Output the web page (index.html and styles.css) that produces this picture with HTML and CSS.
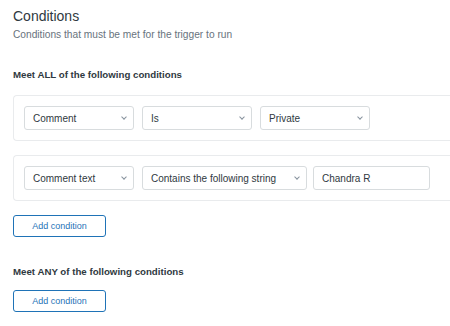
FILE: index.html
```html
<!DOCTYPE html>
<html lang="en">
<head>
    <meta charset="UTF-8">
    <meta name="viewport" content="width=device-width, initial-scale=1.0">
    <title>Conditions</title>
    <link rel="stylesheet" href="styles.css">
</head>
<body>
    <div class="page">
        <h1>Conditions</h1>
        <p class="subtitle">Conditions that must be met for the trigger to run</p>

        <h2>Meet ALL of the following conditions</h2>
        <div class="card">
            <div class="select w-110">Comment <span class="chevron"></span></div>
            <div class="select w-110">Is <span class="chevron"></span></div>
            <div class="select w-110">Private <span class="chevron"></span></div>
        </div>
        <div class="card">
            <div class="select w-110">Comment text <span class="chevron"></span></div>
            <div class="select w-164">Contains the following string <span class="chevron"></span></div>
            <input class="text-input" type="text" value="Chandra R">
        </div>
        <button class="add-btn">Add condition</button>

        <h2 class="any">Meet ANY of the following conditions</h2>
        <button class="add-btn">Add condition</button>
    </div>
</body>
</html>
```

FILE: styles.css
```css
body {
    margin: 0;
    font-family: "Liberation Sans", Arial, sans-serif;
    color: #2f3941;
    background: #fff;
    overflow: hidden;
}
.page {
    padding: 6px 0 0 13px;
}
h1 {
    margin: 0;
    font-size: 14px;
    font-weight: normal;
    line-height: 20px;
}
.subtitle {
    margin: 1px 0 0;
    font-size: 10.2px;
    line-height: 16px;
    color: #68737d;
}
h2 {
    margin: 25px 0 13px;
    font-size: 9.7px;
    font-weight: bold;
    line-height: 14px;
}
h2.any {
    margin-top: 28px;
    margin-bottom: 11px;
}
/* card runs on past the right edge of the view, so no right border */
.card {
    display: flex;
    gap: 8px;
    align-items: center;
    margin-bottom: 14px;
    padding: 10px 10px;
    border: 1px solid #e9ebed;
    border-right: none;
    border-radius: 4px 0 0 4px;
}
.select, .text-input {
    box-sizing: border-box;
    height: 24px;
    border: 1px solid #d8dcde;
    border-radius: 3px;
    font-family: inherit;
    font-size: 10px;
    color: #2f3941;
}
.select {
    display: flex;
    align-items: center;
    justify-content: space-between;
    padding: 0 7px 0 8px;
}
.w-110 {
    width: 110px;
}
.w-164 {
    width: 165px;
}
.chevron {
    width: 3px;
    height: 3px;
    margin-top: -2px;
    border-right: 1px solid #87929d;
    border-bottom: 1px solid #87929d;
    transform: rotate(45deg);
}
.text-input {
    width: 117px;
    margin-left: -2px;
    padding: 0 8px;
    outline: none;
}
.add-btn {
    display: block;
    box-sizing: border-box;
    width: 93px;
    height: 22px;
    padding: 0;
    border: 1px solid #1f73b7;
    border-radius: 3px;
    background: #fff;
    color: #1f73b7;
    font-family: inherit;
    font-size: 9px;
}
```
